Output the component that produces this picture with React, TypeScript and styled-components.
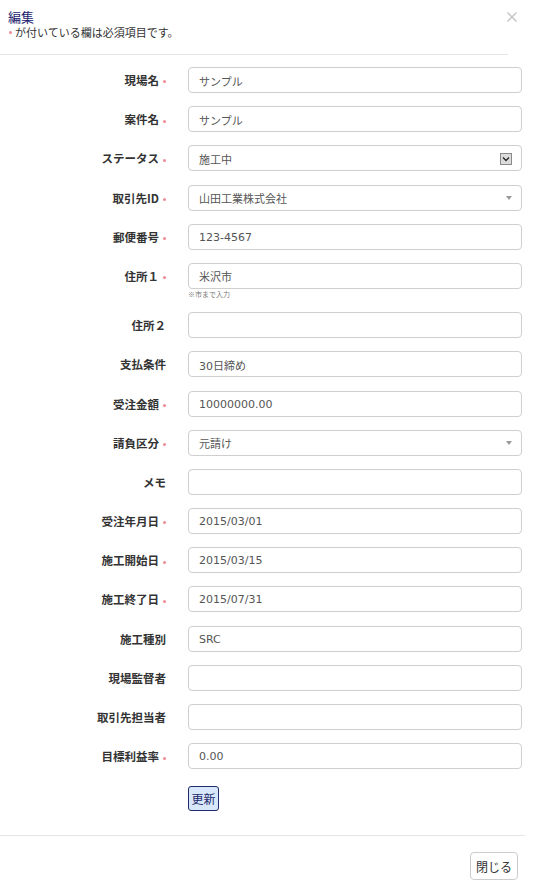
import React from "react";
import styled, { createGlobalStyle } from "styled-components";

const Global = createGlobalStyle`
  html, body { margin: 0; padding: 0; background: #fff; }
  body { font-family: "DejaVu Sans", "Noto Sans CJK JP", sans-serif; color: #333; }
  * { box-sizing: border-box; }
`;

const Modal = styled.div`
  width: 540px;
  height: 890px;
  background: #fff;
  display: flex;
  flex-direction: column;
`;

const Header = styled.div`
  position: relative;
  height: 55px;
  width: 508px;
  padding: 9px 0 0 8px;
  border-bottom: 1px solid #e5e5e5;
`;

const Title = styled.div`
  font-family: "Noto Sans CJK JP", sans-serif;
  font-size: 13px;
  line-height: 16px;
  color: #22226e;
`;

const Note = styled.div`
  font-family: "Noto Sans CJK JP", sans-serif;
  font-size: 11px;
  line-height: 14px;
  color: #333;
  display: flex;
  align-items: center;
`;

const Close = styled.button`
  position: absolute;
  top: 11px;
  right: -10px;
  width: 12px;
  height: 12px;
  padding: 0;
  border: 0;
  background: none;
  display: flex;
`;

const Req = styled.span<{ $lead?: boolean }>`
  display: inline-block;
  width: 3px;
  height: 3px;
  border-radius: 50%;
  background: #ef8a94;
  margin-left: ${(p) => (p.$lead ? "1px" : "4px")};
  margin-right: ${(p) => (p.$lead ? "3px" : "0")};
  vertical-align: middle;
`;

const Body = styled.div`
  padding: 12px 18px 0 0;
  display: flex;
  flex-direction: column;
  gap: 13.2px;
`;

const Row = styled.div`
  display: grid;
  grid-template-columns: 166px 1fr;
  column-gap: 22px;
  align-items: start;
`;

const Label = styled.div`
  font-family: "Noto Sans CJK JP", sans-serif;
  font-weight: bold;
  font-size: 11.5px;
  color: #333;
  text-align: right;
  line-height: 26px;
  height: 26px;
`;

const Field = styled.div`
  display: flex;
  flex-direction: column;
`;

const Box = styled.div`
  position: relative;
  height: 26px;
  border: 1px solid #cfcfcf;
  border-radius: 4px;
  padding: 1px 10px 0;
  font-size: 11px;
  color: #555;
  display: flex;
  align-items: center;
  justify-content: space-between;
  background: #fff;
`;

const Help = styled.div`
  font-family: "Noto Sans CJK JP", sans-serif;
  font-size: 7px;
  line-height: 9px;
  color: #777;
  margin-top: 1px;
`;

const NativeArrow = styled.span`
  width: 12px;
  height: 12px;
  border: 1px solid #8a8a8a;
  background: #dcdcdc;
  display: flex;
  align-items: center;
  justify-content: center;
  margin-right: -1px;
`;

const Caret = styled.span`
  width: 0;
  height: 0;
  border-left: 3px solid transparent;
  border-right: 3px solid transparent;
  border-top: 4px solid #999;
  margin-right: -1px;
`;

const Submit = styled.button`
  width: 31px;
  height: 25px;
  padding: 0;
  margin-top: 4px;
  border: 1px solid #1e2a6a;
  border-radius: 3px;
  background: #d9e7fb;
  color: #1e2a6a;
  font-family: "Noto Sans CJK JP", sans-serif;
  font-size: 12px;
`;

const Footer = styled.div`
  margin-top: 24px;
  width: 525px;
  border-top: 1px solid #e5e5e5;
  padding-top: 16px;
  display: flex;
  justify-content: flex-end;
  padding-right: 7px;
`;

const CloseBtn = styled.button`
  width: 48px;
  height: 28px;
  padding: 0;
  border: 1px solid #ccc;
  border-radius: 4px;
  background: #fff;
  color: #333;
  font-family: "Noto Sans CJK JP", sans-serif;
  font-size: 12px;
`;

type F = {
  label: string;
  req?: boolean;
  value?: string;
  kind?: "text" | "native" | "select";
  help?: string;
};

const fields: F[] = [
  { label: "現場名", req: true, value: "サンプル" },
  { label: "案件名", req: true, value: "サンプル" },
  { label: "ステータス", req: true, value: "施工中", kind: "native" },
  { label: "取引先ID", req: true, value: "山田工業株式会社", kind: "select" },
  { label: "郵便番号", req: true, value: "123-4567" },
  { label: "住所１", req: true, value: "米沢市", help: "※市まで入力" },
  { label: "住所２" },
  { label: "支払条件", value: "30日締め" },
  { label: "受注金額", req: true, value: "10000000.00" },
  { label: "請負区分", req: true, value: "元請け", kind: "select" },
  { label: "メモ" },
  { label: "受注年月日", req: true, value: "2015/03/01" },
  { label: "施工開始日", req: true, value: "2015/03/15" },
  { label: "施工終了日", req: true, value: "2015/07/31" },
  { label: "施工種別", value: "SRC" },
  { label: "現場監督者" },
  { label: "取引先担当者" },
  { label: "目標利益率", req: true, value: "0.00" },
];

export default function App() {
  return (
    <Modal>
      <Global />
      <Header>
        <Title>編集</Title>
        <Note>
          <Req $lead />
          が付いている欄は必須項目です。
        </Note>
        <Close aria-label="close">
          <svg width="12" height="12" viewBox="0 0 12 12">
            <path d="M1.5 1.5 L10.5 10.5 M10.5 1.5 L1.5 10.5" stroke="#c4c4c4" strokeWidth="1.4" />
          </svg>
        </Close>
      </Header>
      <Body>
        {fields.map((f) => (
          <Row key={f.label}>
            <Label>
              {f.label}
              {f.req && <Req />}
            </Label>
            <Field>
              <Box>
                <span>{f.value ?? ""}</span>
                {f.kind === "native" && (
                  <NativeArrow>
                    <svg width="8" height="6" viewBox="0 0 8 6">
                      <path d="M1 1.5 L4 4.5 L7 1.5" stroke="#222" strokeWidth="1.3" fill="none" />
                    </svg>
                  </NativeArrow>
                )}
                {f.kind === "select" && <Caret />}
              </Box>
              {f.help && <Help>{f.help}</Help>}
            </Field>
          </Row>
        ))}
        <Row>
          <div />
          <div>
            <Submit>更新</Submit>
          </div>
        </Row>
      </Body>
      <Footer>
        <CloseBtn>閉じる</CloseBtn>
      </Footer>
    </Modal>
  );
}
